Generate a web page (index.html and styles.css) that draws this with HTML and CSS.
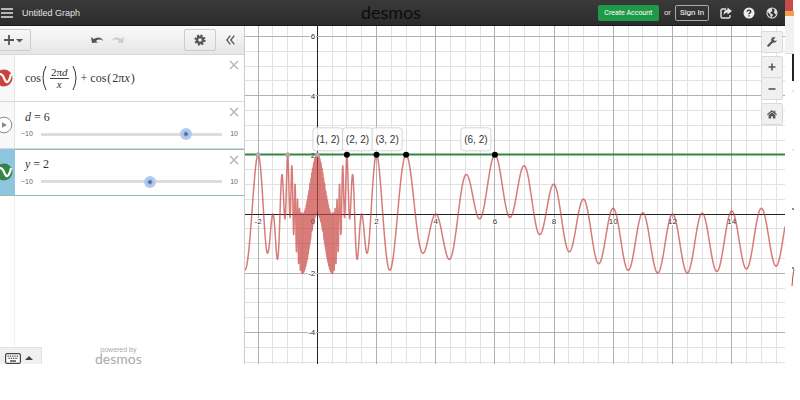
FILE: index.html
```html
<!DOCTYPE html>
<html lang="en">
<head>
  <meta charset="UTF-8" />
  <meta name="viewport" content="width=device-width, initial-scale=1.0">
  <title>Untitled Graph</title>
  <link rel="stylesheet" href="styles.css">
</head>
<body>
  <div class="app">
    <header class="header">
      <div class="header-side">
        <button class="icon-btn menu-btn" aria-label="Menu">
          <svg width="12" height="10" viewBox="0 0 12 10"><path d="M0 1h12M0 5h12M0 9h12" stroke="#e4e4e4" stroke-width="1.6"/></svg>
        </button>
        <span class="graph-title">Untitled Graph</span>
      </div>
      <div class="brand">desmos</div>
      <div class="header-side header-right">
        <button class="create-btn">Create Account</button>
        <span class="or">or</span>
        <button class="signin-btn">Sign In</button>
        <button class="icon-btn" aria-label="Share">
          <svg width="12" height="12" viewBox="0 0 12 12"><path d="M6 2H2.500Q1 2 1 3.500V9.500Q1 11 2.500 11H8.500Q10 11 10 9.500V8" fill="none" stroke="#e4e4e4" stroke-width="1.4"/><path d="M7.500 .5L12 4 7.500 7.500V5.500Q5 5.300 3.500 8 3.600 3 7.500 2.600z" fill="#e4e4e4"/></svg>
        </button>
        <button class="icon-btn" aria-label="Help">
          <svg width="12" height="12" viewBox="0 0 12 12"><circle cx="6" cy="6" r="5.500" fill="#ececec"/><path d="M4.200 4.700Q4.300 3.100 6 3.100T7.800 4.600Q7.800 5.400 6.900 5.900 6 6.300 6 7.300M6 8.200V9.600" fill="none" stroke="#333" stroke-width="1.4"/></svg>
        </button>
        <button class="icon-btn" aria-label="Language">
          <svg width="12" height="12" viewBox="0 0 12 12"><circle cx="6" cy="6" r="5" fill="#333" stroke="#e4e4e4" stroke-width="1.100"/><path d="M1.500 3.500L4 1.300 6.500 1.500 5.800 3 6.600 4 4.800 5 4.200 6.200 5.800 6.700 7 8 6 9.500 5.600 10.800 4.500 9.500 4.200 7.600 2.600 6.200zM8 2.200L10 3.200 10.800 5.800 10 7.800 8.800 6.500 7.700 5.500 8.600 4.200z" fill="#e4e4e4"/></svg>
        </button>
      </div>
    </header>

    <main class="main">
      <aside class="sidebar">
        <div class="toolbar">
          <button class="tool-btn add-btn" aria-label="Add item">
            <svg width="19" height="10" viewBox="0 0 19 10"><path d="M5 0V10M0 5H10" stroke="#555" stroke-width="1.800"/><path d="M12 4H19L15.500 7.500z" fill="#555"/></svg>
          </button>
          <div class="history">
            <button class="icon-btn" aria-label="Undo">
              <svg width="13" height="9" viewBox="0 0 13 9"><path d="M0 1L1 7 7 6.500 4.800 4.900Q8.500 2.300 12.500 5 9-.8 2.700 3.100z" fill="#555"/></svg>
            </button>
            <button class="icon-btn" aria-label="Redo">
              <svg width="13" height="9" viewBox="0 0 13 9"><path d="M13 1L12 7 6 6.500 8.200 4.900Q4.500 2.300 .5 5 4-.8 10.300 3.100z" fill="#ccc"/></svg>
            </button>
          </div>
          <button class="tool-btn gear-btn" aria-label="Settings">
            <svg width="12" height="12" viewBox="0 0 12 12"><circle cx="6" cy="6" r="4.700" fill="none" stroke="#555" stroke-width="1.800" stroke-dasharray="2 1.690"/><circle cx="6" cy="6" r="3" fill="none" stroke="#555" stroke-width="2.400"/></svg>
          </button>
          <button class="icon-btn hide-btn" aria-label="Hide list">
            <svg width="9" height="10" viewBox="0 0 9 10"><path d="M4.300 .7L.8 5 4.300 9.300M8.300 .7L4.800 5 8.300 9.300" fill="none" stroke="#555" stroke-width="1.300"/></svg>
          </button>
        </div>

        <div class="expr">
          <div class="tab">
            <svg class="tab-icon" width="18" height="18" viewBox="0 0 18 18"><circle cx="9" cy="9" r="8.500" fill="#c74440"/><path d="M4 5.500Q7 4 9 9T12.500 13Q15 11 16 5" fill="none" stroke="#fff" stroke-width="2.200"/></svg>
          </div>
          <div class="expr-body">
            <div class="math">
              <span>cos</span>
              <svg class="paren" width="5" height="26" viewBox="0 0 5 26"><path d="M4 1Q-2 13 4 25" fill="none" stroke="#333"/></svg>
              <span class="frac"><span class="num">2π<i>d</i></span><i>x</i></span>
              <svg class="paren" width="5" height="26" viewBox="0 0 5 26"><path d="M1 1Q7 13 1 25" fill="none" stroke="#333"/></svg>
              <span class="plus">+</span>
              <span>cos<span class="small-paren">(</span>2π<i>x</i><span class="small-paren">)</span></span>
            </div>
          </div>
          <button class="close" aria-label="Delete"><svg width="10" height="10" viewBox="0 0 10 10"><path d="M1 1L9 9M9 1L1 9" stroke="#bbb" stroke-width="1.600"/></svg></button>
        </div>

        <div class="expr">
          <div class="tab">
            <svg class="tab-icon" width="18" height="18" viewBox="0 0 18 18"><circle cx="9" cy="9" r="7.800" fill="#fff" stroke="#888"/><path d="M7 6.200L12 9 7 11.800z" fill="#888"/></svg>
          </div>
          <div class="expr-body">
            <label class="math" for="slider-d"><i>d</i>&nbsp;= 6</label>
            <div class="slider">
              <span class="limit">−10</span>
              <input type="range" id="slider-d" min="-10" max="10" step="1" value="6">
              <span>10</span>
            </div>
          </div>
          <button class="close" aria-label="Delete"><svg width="10" height="10" viewBox="0 0 10 10"><path d="M1 1L9 9M9 1L1 9" stroke="#bbb" stroke-width="1.600"/></svg></button>
        </div>

        <div class="expr selected">
          <div class="tab">
            <svg class="tab-icon" width="18" height="18" viewBox="0 0 18 18"><circle cx="9" cy="9" r="8.500" fill="#348543"/><path d="M4 5.500Q7 4 9 9T12.500 13Q15 11 16 5" fill="none" stroke="#fff" stroke-width="2.200"/></svg>
          </div>
          <div class="expr-body">
            <label class="math" for="slider-y"><i>y</i>&nbsp;= 2</label>
            <div class="slider">
              <span class="limit">−10</span>
              <input type="range" id="slider-y" min="-10" max="10" step="1" value="2">
              <span>10</span>
            </div>
          </div>
          <button class="close" aria-label="Delete"><svg width="10" height="10" viewBox="0 0 10 10"><path d="M1 1L9 9M9 1L1 9" stroke="#bbb" stroke-width="1.600"/></svg></button>
        </div>

        <div class="sidebar-rest"></div>

        <div class="sidebar-footer">
          <button class="keypad-btn" aria-label="Open keypad">
            <svg width="16" height="11" viewBox="0 0 16 11"><rect x=".6" y=".6" width="14.800" height="9.800" rx="1.500" fill="#fff" stroke="#444" stroke-width="1.200"/><path d="M2.500 3.200H14M3.500 5.400H13" stroke="#444" stroke-width="1.300" stroke-dasharray="1.300 1"/><path d="M5 8H11" stroke="#444" stroke-width="1.400"/></svg>
            <svg width="8" height="4" viewBox="0 0 8 4"><path d="M0 4L4 0 8 4z" fill="#444"/></svg>
          </button>
          <div class="powered">
            <span>powered by</span>
            <span class="powered-brand">desmos</span>
          </div>
        </div>
      </aside>

      <section class="graph">
        <svg id="plot"></svg>
        <div class="graph-tools">
          <button aria-label="Graph settings">
            <svg width="10" height="10" viewBox="0 0 10 10"><path d="M1.300 8.700L5.500 4.500" stroke="#555" stroke-width="2.200" stroke-linecap="round"/><path d="M8.500 .6A2.800 2.800 0 1 0 9.700 3.200L7.800 3.900 6.400 2.600z" fill="#555"/></svg>
          </button>
          <div class="zoom">
            <button aria-label="Zoom in"><svg width="8" height="8" viewBox="0 0 8 8"><path d="M4 .5V7.500M.5 4H7.500" stroke="#555" stroke-width="1.600"/></svg></button>
            <button aria-label="Zoom out"><svg width="8" height="8" viewBox="0 0 8 8"><path d="M.5 4H7.500" stroke="#555" stroke-width="1.600"/></svg></button>
          </div>
          <button aria-label="Default viewport">
            <svg width="10" height="9" viewBox="0 0 10 9"><path d="M.4 4.700L5 .8 9.600 4.700M7.800 .8V3" fill="none" stroke="#555" stroke-width="1.200"/><path d="M1.600 5.200L5 2.300 8.400 5.200V8.600H5.900V6.200H4.100V8.600H1.600z" fill="#555"/></svg>
          </button>
        </div>
      </section>
    </main>
  </div>

  <div class="edge">
    <div class="edge-red"></div>
    <div class="edge-orange"></div>
    <div class="edge-grey"></div>
    <div class="edge-dark"></div>
    <svg class="edge-marks" width="15" height="220" viewBox="0 0 15 220"><path d="M7 128H9M7 187H9" stroke="#348543" stroke-width="1.500"/><path d="M9 188Q8 192 7 205" fill="none" stroke="#c74440"/><path d="M7 10H9M7 69H9" stroke="#ccc"/></svg>
  </div>

  <script src="graph.js"></script>
</body>
</html>
```

FILE: styles.css
```css
:root {
  --header-dark: #2c2c2c;
  --green: #1f9a48;
  --border-light: #d8d8d8;
  --selected: #8fc5de;
}

* {
  box-sizing: border-box;
}

body {
  font-family: "Liberation Sans", Arial, sans-serif;
  margin: 0;
  padding-bottom: 36px;
  height: 100vh;
  display: flex;
  background: #fff;
  color: #444;
  overflow: hidden;
}

button {
  display: flex;
  align-items: center;
  justify-content: center;
  padding: 0;
  font-family: inherit;
  cursor: pointer;
}

.app {
  flex: 1;
  min-width: 0;
  display: flex;
  flex-direction: column;
}

.header {
  height: 26px;
  display: flex;
  align-items: center;
  background: linear-gradient(#3a3a3a, var(--header-dark));
  border-bottom: 1px solid #1a1a1a;
  color: #e4e4e4;
}

.header-side {
  flex: 1;
  display: flex;
  align-items: center;
}

.header-right {
  justify-content: flex-end;
  padding-right: 7px;
}

.icon-btn {
  border: none;
  background: none;
}

.menu-btn {
  margin-left: 1px;
}

.graph-title {
  margin-left: 9px;
  font-size: 9px;
}

.brand {
  padding: 0 0 2px 4px;
  font-family: Lato, sans-serif;
  font-size: 18px;
  line-height: 20px;
  color: #0c0c0c;
}

.create-btn,
.signin-btn {
  height: 16px;
  border-radius: 2px;
  font-family: Roboto, sans-serif;
  font-weight: 400;
  color: #fff;
}

.create-btn {
  width: 61px;
  border: none;
  background: var(--green);
  font-size: 7px;
}

.signin-btn {
  width: 34px;
  border: 1px solid #aaa;
  background: none;
  font-size: 8px;
}

.or {
  margin: 0 4px 0 5px;
  font-size: 8px;
}

.header-right .icon-btn {
  margin-left: 11px;
}

.main {
  flex: 1;
  min-height: 0;
  display: flex;
}

.sidebar {
  width: 245px;
  display: flex;
  flex-direction: column;
  border-right: 1px solid #ccc;
}

.toolbar {
  height: 29px;
  display: flex;
  align-items: center;
  background: linear-gradient(#fafafa, #e6e6e6);
  border-bottom: 1px solid var(--border-light);
}

.tool-btn {
  height: 22px;
  border: 1px solid #ccc;
  border-radius: 2px;
  background: linear-gradient(#f8f8f8, #e8e8e8);
}

.add-btn {
  width: 31px;
  border-left: none;
  border-radius: 0 2px 2px 0;
  padding-right: 4px;
}

.history {
  flex: 1;
  display: flex;
  justify-content: center;
  gap: 7px;
}

.gear-btn {
  width: 32px;
}

.hide-btn {
  width: 28px;
}

.expr {
  height: 47px;
  display: flex;
  border-bottom: 1px solid var(--border-light);
}

.tab {
  width: 15px;
  display: flex;
  align-items: center;
  background: #f8f8f8;
  border-right: 1px solid #e4e4e4;
}

.tab-icon {
  flex-shrink: 0;
  margin-left: -5px;
}

.expr-body {
  flex: 1;
  display: flex;
  flex-direction: column;
  justify-content: center;
}

.selected {
  border-color: #8fbcae;
}

.selected .tab {
  background: var(--selected);
  border-color: var(--selected);
}

.selected .expr-body,
.selected .close {
  border-top: 1px solid #8fbcae;
}

.math {
  display: flex;
  align-items: center;
  padding-left: 10px;
  font-family: "Liberation Serif", "Times New Roman", serif;
  font-size: 12px;
  line-height: 14px;
  color: #333;
}

.paren {
  margin: 0 1px;
}

.frac {
  display: flex;
  flex-direction: column;
  align-items: center;
  margin: 0 2px;
  font-size: 11px;
  line-height: 11px;
}

.num {
  border-bottom: 1px solid #444;
  padding: 0 1px;
}

.plus {
  margin: 0 3px;
}

.small-paren {
  padding: 0 1px;
}

.slider {
  display: flex;
  align-items: center;
  margin: 4px -14px 0 6px;
  font-size: 7px;
  line-height: 12px;
  color: #666;
}

.limit {
  width: 14px;
}

/* track is drawn between the thumb's two end positions */
.slider input {
  appearance: none;
  flex: 1;
  min-width: 0;
  height: 13px;
  margin: 0 2px 0 0;
  background: linear-gradient(#ddd, #ddd) center / calc(100% - 12px) 3px no-repeat;
}

.slider input::-webkit-slider-thumb {
  appearance: none;
  width: 12px;
  height: 12px;
  border-radius: 50%;
  background: radial-gradient(circle, #3f6fbc 0 1px, #b3caea 3px);
}

.close {
  width: 20px;
  align-items: flex-start;
  padding-top: 5px;
  border: none;
  background: none;
}

.sidebar-rest {
  flex: 1;
  width: 15px;
  border-right: 1px solid #f0f0f0;
}

.sidebar-footer {
  display: flex;
  align-items: flex-end;
}

.keypad-btn {
  width: 42px;
  height: 17px;
  gap: 4px;
  padding: 4px 4px 0 0;
  border: 1px solid #e0e0e0;
  border-width: 1px 1px 0 0;
  background: #f0f0f0;
}

.powered {
  display: flex;
  flex-direction: column;
  align-items: center;
  margin-left: 53px;
  font-size: 7px;
  line-height: 8px;
  color: #aaa;
}

.powered-brand {
  font-family: Lato, sans-serif;
  font-size: 14px;
  line-height: 10px;
}

.graph {
  position: relative;
  flex: 1;
  min-width: 0;
}

#plot {
  display: block;
  width: 100%;
  height: 100%;
}

.grid-minor {
  stroke: #e2e2e2;
}

.grid-major {
  stroke: #b0b0b0;
}

.axis {
  stroke: #222;
}

.tick {
  font-size: 8px;
  fill: #333;
  stroke: #fff;
  stroke-width: 2px;
  paint-order: stroke;
}

.curve {
  fill: none;
  stroke: #c74440;
  stroke-opacity: 0.7;
  stroke-width: 1.5px;
  stroke-linejoin: round;
}

.level {
  stroke: #348543;
  stroke-width: 2px;
}

.point {
  fill: #000;
}

.point-faded {
  fill: #aaa;
}

.label-box {
  fill: #fff;
  fill-opacity: 0.9;
  stroke: #d4d4d4;
}

.label-text {
  font-size: 10px;
  fill: #333;
  text-anchor: middle;
}

/* floats over the plot */
.graph-tools {
  position: absolute;
  top: 5px;
  right: 2px;
  width: 22px;
  display: flex;
  flex-direction: column;
  gap: 3px;
}

.graph-tools button {
  width: 100%;
  height: 22px;
  border: 1px solid #dadada;
  border-radius: 2px;
  background: #f0f0f0;
}

.zoom button + button {
  border-top: none;
}

.edge {
  width: 15px;
  display: flex;
  flex-direction: column;
}

.edge-red {
  width: 8px;
  height: 11px;
  background: #c94a4a;
}

.edge-orange {
  width: 9px;
  height: 5px;
  background: #f0a050;
}

.edge-grey {
  width: 9px;
  height: 38px;
  background: #f2f2f2;
  border-bottom: 1px solid #ddd;
}

.edge-dark {
  width: 2px;
  height: 27px;
  margin-left: 7px;
  background: #222;
}
```

FILE: graph.js
```js
const NS = 'http://www.w3.org/2000/svg';
const plot = document.getElementById('plot');
const sliderD = document.getElementById('slider-d');
const sliderY = document.getElementById('slider-y');

// pixels per unit, and where the origin sits in the plot
const UNIT = 29.6;
const ORIGIN_X = 72.3;
const ORIGIN_Y = 188;

function add(name, attrs, text) {
  const el = document.createElementNS(NS, name);
  for (const key in attrs) el.setAttribute(key, attrs[key]);
  if (text !== undefined) el.textContent = text;
  plot.appendChild(el);
}

const px = x => ORIGIN_X + x * UNIT;
const py = y => ORIGIN_Y - y * UNIT;
const snap = v => Math.floor(v) + 0.5;

function draw() {
  const w = plot.clientWidth;
  const h = plot.clientHeight;
  const d = Number(sliderD.value);
  const level = Number(sliderY.value);
  plot.textContent = '';

  const left = Math.ceil(-ORIGIN_X / UNIT * 2);
  const right = Math.floor((w - ORIGIN_X) / UNIT * 2);
  const top = Math.floor(ORIGIN_Y / UNIT * 2);
  const bottom = Math.ceil((ORIGIN_Y - h) / UNIT * 2);

  // minor lines first so the major ones stay on top
  for (const major of [false, true]) {
    const cls = major ? 'grid-major' : 'grid-minor';
    for (let i = left; i <= right; i++) {
      if ((i % 4 === 0) !== major) continue;
      const x = snap(px(i / 2));
      add('line', { x1: x, x2: x, y1: 0, y2: h, class: i === 0 ? 'axis' : cls });
    }
    for (let i = bottom; i <= top; i++) {
      if ((i % 4 === 0) !== major) continue;
      const y = snap(py(i / 2));
      add('line', { x1: 0, x2: w, y1: y, y2: y, class: i === 0 ? 'axis' : cls });
    }
  }

  for (let i = left; i <= right; i++) {
    if (i % 4 || i === 0) continue;
    add('text', { x: px(i / 2), y: ORIGIN_Y + 10, class: 'tick', 'text-anchor': 'middle' }, i / 2);
  }
  for (let i = bottom; i <= top; i++) {
    if (i % 4) continue;
    const y = i === 0 ? ORIGIN_Y + 10 : py(i / 2) + 3;
    add('text', { x: ORIGIN_X - 2, y: y, class: 'tick', 'text-anchor': 'end' }, i / 2);
  }

  const pts = [];
  for (let p = 0; p <= w; p += 0.05) {
    const x = (p - ORIGIN_X) / UNIT;
    if (Math.abs(x) < 0.001) continue;
    const y = Math.cos(2 * Math.PI * d / x) + Math.cos(2 * Math.PI * x);
    pts.push(p.toFixed(2) + ' ' + py(y).toFixed(2));
  }
  add('path', { d: 'M' + pts.join('L'), class: 'curve' });

  add('line', { x1: 0, x2: w, y1: snap(py(level)), y2: snap(py(level)), class: 'level' });

  for (const x of [-2, -1, 0]) {
    add('circle', { cx: px(x), cy: py(2), r: 2.5, class: 'point-faded' });
  }
  for (const x of [1, 2, 3, 6]) {
    add('rect', { x: px(x) - 34, y: py(2) - 27, width: 30, height: 23, rx: 3, class: 'label-box' });
    add('text', { x: px(x) - 19, y: py(2) - 12, class: 'label-text' }, '(' + x + ', 2)');
    add('circle', { cx: px(x), cy: py(2), r: 3, class: 'point' });
  }
}

draw();
sliderD.addEventListener('input', draw);
sliderY.addEventListener('input', draw);
window.addEventListener('resize', draw);
```
